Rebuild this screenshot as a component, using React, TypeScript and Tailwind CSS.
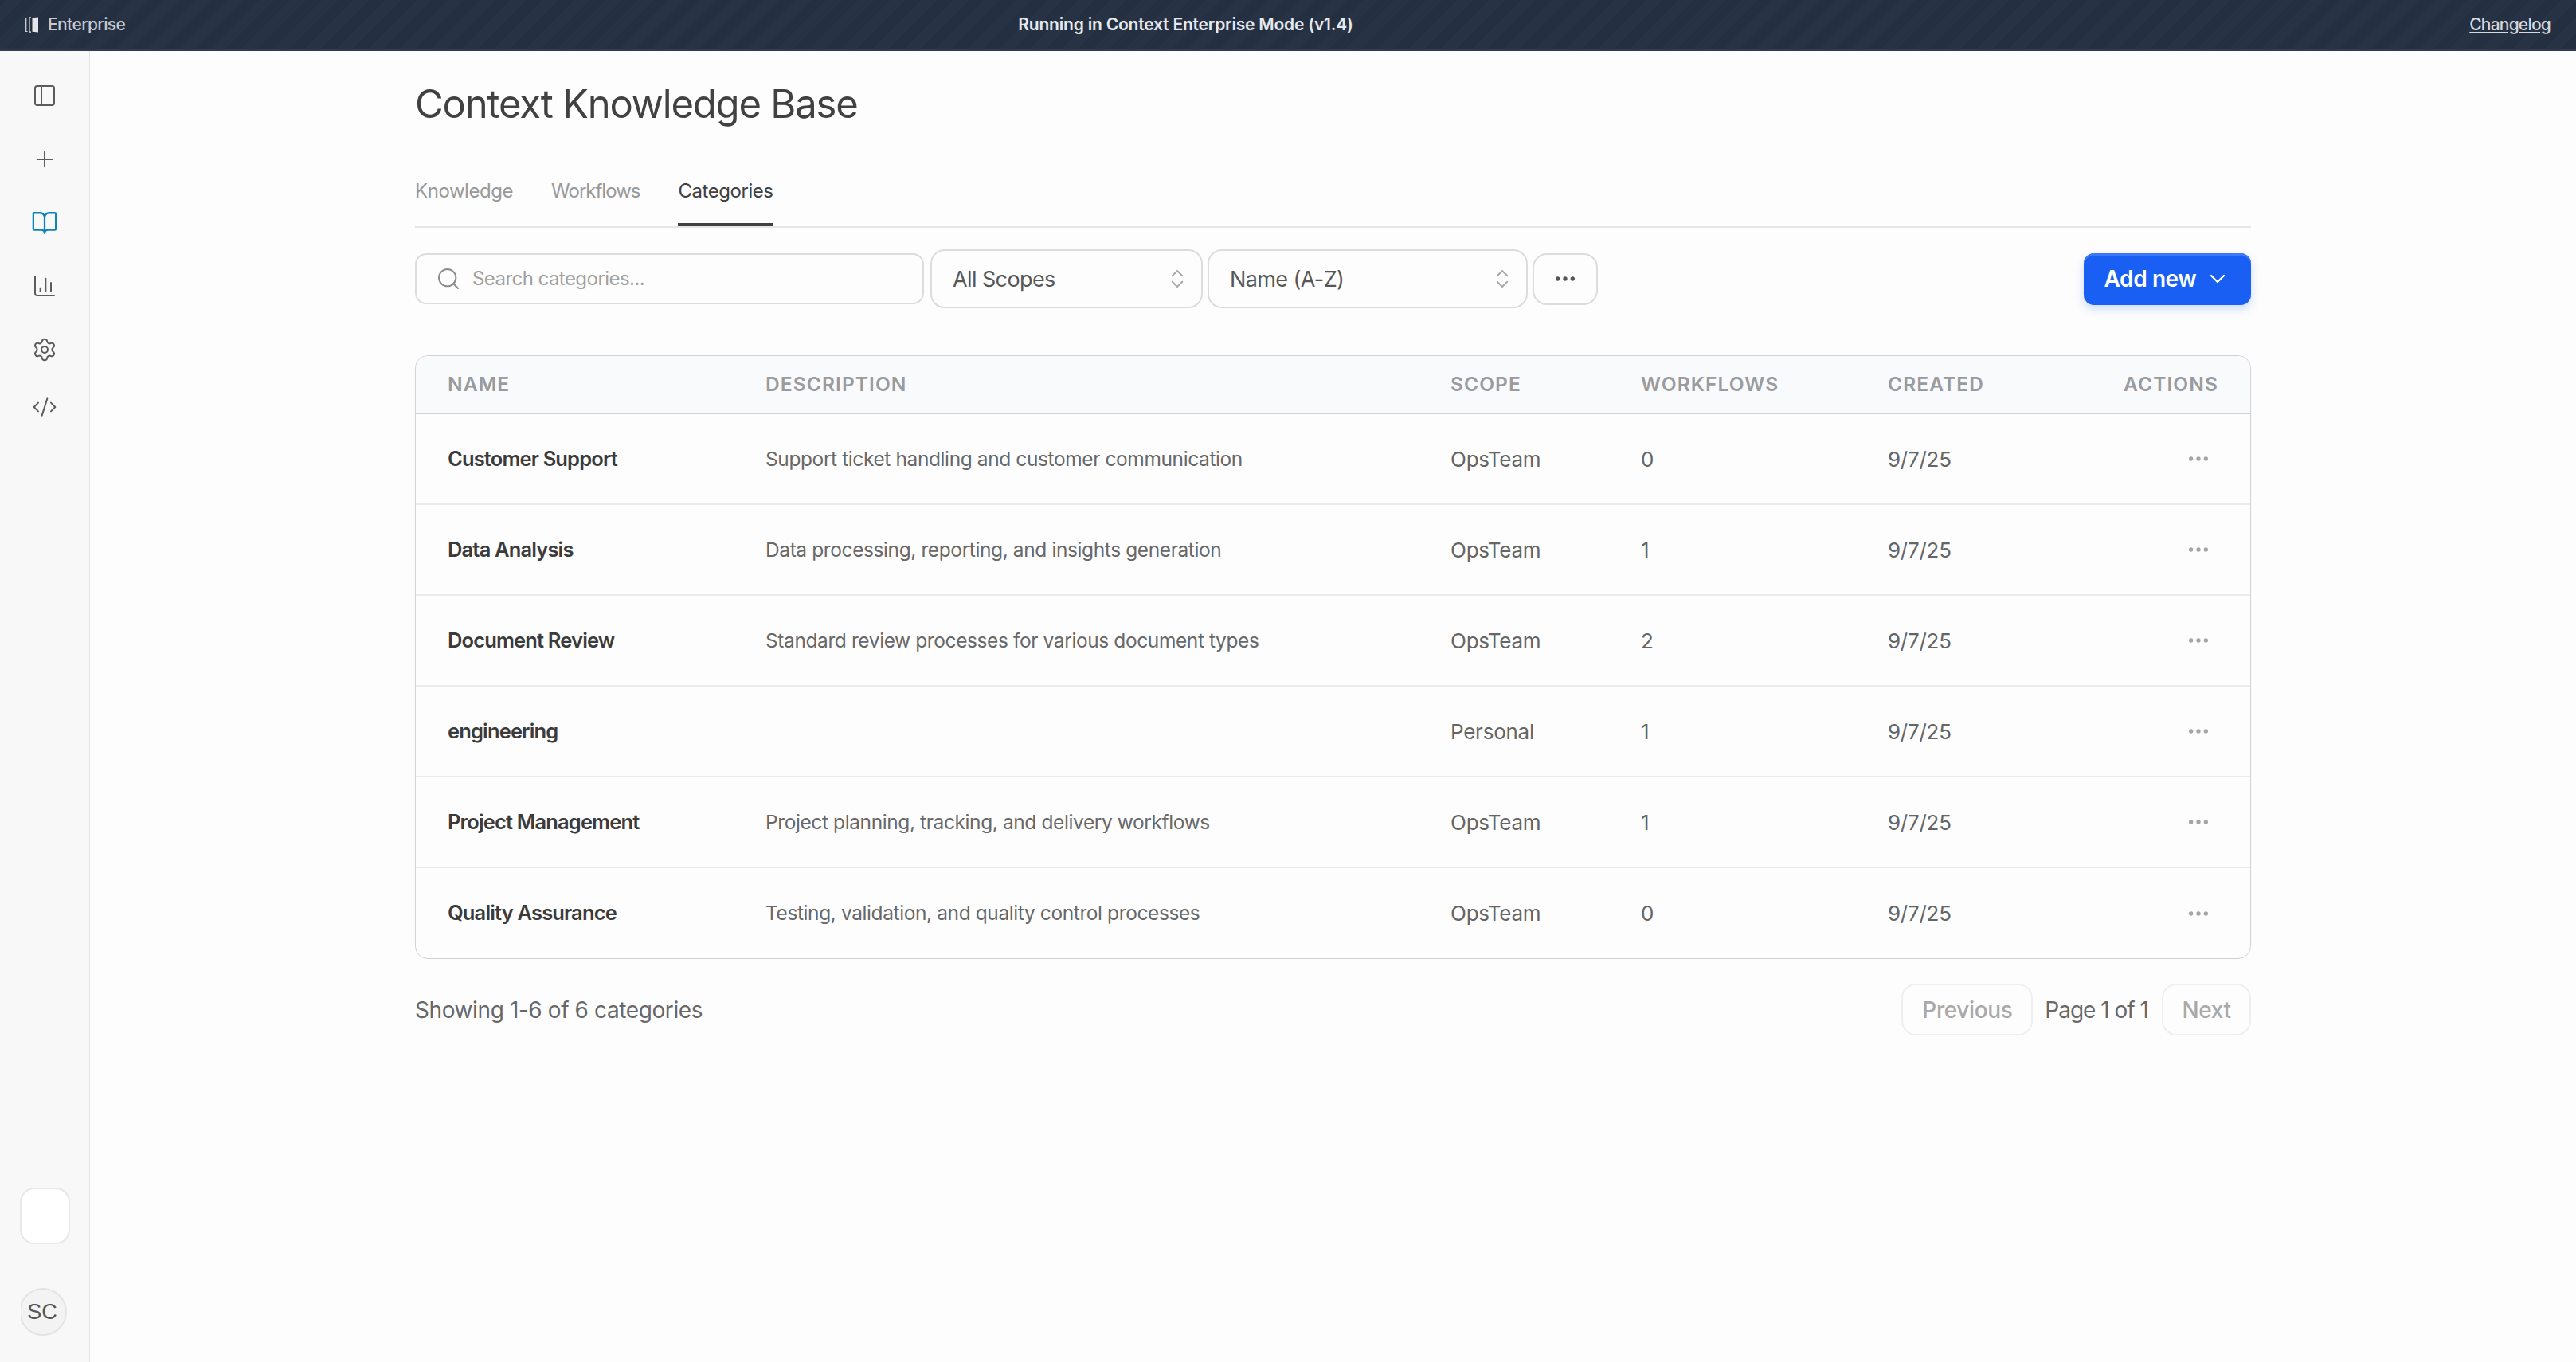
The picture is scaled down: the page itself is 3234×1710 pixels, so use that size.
import {
  BookOpen,
  ChartColumn,
  ChevronDown,
  ChevronsUpDown,
  CodeXml,
  Ellipsis,
  PanelLeft,
  Plus,
  Search,
  Settings,
} from "lucide-react";

const rows = [
  { name: "Customer Support", description: "Support ticket handling and customer communication", scope: "OpsTeam", workflows: 0 },
  { name: "Data Analysis", description: "Data processing, reporting, and insights generation", scope: "OpsTeam", workflows: 1 },
  { name: "Document Review", description: "Standard review processes for various document types", scope: "OpsTeam", workflows: 2 },
  { name: "engineering", description: "", scope: "Personal", workflows: 1 },
  { name: "Project Management", description: "Project planning, tracking, and delivery workflows", scope: "OpsTeam", workflows: 1 },
  { name: "Quality Assurance", description: "Testing, validation, and quality control processes", scope: "OpsTeam", workflows: 0 },
];

function Logo() {
  return (
    <svg width="16" height="20" viewBox="0 0 16 20" fill="none">
      <path d="M2.5 1.5H0.7V18.5H2.5" stroke="#d9dbe0" strokeWidth="1.2" />
      <path d="M7 0.8H5V19.2H7" stroke="#d9dbe0" strokeWidth="1.2" />
      <path d="M8.5 1.2L16 0.4V19.6L8.5 18.8Z" fill="#e4e6ea" />
    </svg>
  );
}

function Banner() {
  return (
    <div className="flex h-[64px] items-center border-b-[3px] border-[#303c4e] bg-[#232f40] bg-[repeating-linear-gradient(-45deg,#243041_0px,#243041_14px,#273345_14px,#273345_28px)] pl-[32px] pr-[32px]">
      <div className="flex items-center gap-[12px]">
        <Logo />
        <span className="text-[21px] font-medium tracking-[-0.6px] text-[#c7cad1]">Enterprise</span>
      </div>
      <span className="ml-[1121px] mr-auto text-[21px] font-semibold tracking-[-0.2px] text-[#e6e8ec]">
        Running in Context Enterprise Mode (v1.4)
      </span>
      <a className="text-[21px] font-medium tracking-[-0.8px] text-[#d5d8dd] underline">Changelog</a>
    </div>
  );
}

function Sidebar() {
  return (
    <aside className="flex w-[113px] shrink-0 flex-col items-center border-r border-[#e3e3e3] bg-[#f8f8f8] pb-[33px]">
      <PanelLeft size={32} strokeWidth={1.5} className="mt-[40px] text-[#5c5c5c]" />
      <Plus size={32} strokeWidth={1.5} className="mt-[48px] text-[#5c5c5c]" />
      <BookOpen size={34} strokeWidth={1.6} className="mt-[47px] text-[#0a84b5]" />
      <ChartColumn size={32} strokeWidth={1.5} className="mt-[46px] text-[#5c5c5c]" />
      <Settings size={32} strokeWidth={1.5} className="mt-[48px] text-[#5c5c5c]" />
      <CodeXml size={32} strokeWidth={1.5} className="mt-[40px] text-[#5c5c5c]" />
      <div className="mt-auto h-[71px] w-[63px] rounded-[18px] border-2 border-[#e8e8e8] bg-white" />
      <div className="ml-[-2px] mt-[55px] w-[58px] self-center overflow-hidden">
        <div className="ml-[-2px] flex h-[60px] w-[60px] items-center justify-center rounded-full border-2 border-[#e3e3e3] bg-[#f3f3f3] pr-[2px] font-['Liberation_Sans',sans-serif] text-[27px] text-[#555555]">
          SC
        </div>
      </div>
    </aside>
  );
}

function Select({ label, width }: { label: string; width: string }) {
  return (
    <button className={`flex h-[74px] items-center justify-between rounded-[18px] border-2 border-[#dcdcdc] pl-[26px] pr-[15px] text-[27px] tracking-[-0.6px] text-[#575757] ${width}`}>
      <span className="pt-[2px]">{label}</span>
      <ChevronsUpDown size={30} strokeWidth={1.6} className="text-[#a8a8a8]" />
    </button>
  );
}

function Toolbar() {
  return (
    <div className="mt-[27px] flex items-center gap-[6px]">
      <div className="mr-[2px] flex h-[64px] w-[639px] items-center gap-[14px] rounded-[14px] border-2 border-[#dcdcdc] pl-[24px] text-[24px] tracking-[-0.55px] text-[#a0a0a0]">
        <Search size={32} strokeWidth={1.5} className="text-[#8c8c8c]" />
        Search categories...
      </div>
      <Select label="All Scopes" width="w-[342px]" />
      <Select label="Name (A-Z)" width="w-[402px]" />
      <button className="flex h-[65px] w-[82px] items-center justify-center rounded-[18px] border-2 border-[#dcdcdc]">
        <Ellipsis size={32} className="text-[#555555]" />
      </button>
      <button className="ml-auto flex h-[65px] w-[210px] items-center justify-center gap-[11px] rounded-[13px] bg-[#1a5ff4] text-[28px] font-semibold tracking-[-0.4px] text-white shadow-[inset_0_3px_0_#3d78f6,0_5px_12px_rgba(26,95,244,0.22)]">
        Add new
        <ChevronDown size={32} strokeWidth={1.75} />
      </button>
    </div>
  );
}

function CategoryTable() {
  const th = "px-[40px] text-left text-[24.5px] font-semibold tracking-[1.1px] text-[#9a9b9e]";
  const td = "px-[40px] text-[26px] tracking-[-0.25px] text-[#656565]";
  return (
    <div className="mt-[59px] overflow-hidden rounded-[16px] border border-[#d2d2d6]">
      <table className="w-full table-fixed border-collapse">
        <thead>
          <tr className="h-[72px] border-b-2 border-[#cfd0d4] bg-[#f9fafc]">
            <th className={`${th} w-[399px]`}>NAME</th>
            <th className={`${th} w-[860px]`}>DESCRIPTION</th>
            <th className={`${th} w-[239px]`}>SCOPE</th>
            <th className={`${th} w-[310px]`}>WORKFLOWS</th>
            <th className={`${th} w-[270px]`}>CREATED</th>
            <th className={`${th} !text-right`}>ACTIONS</th>
          </tr>
        </thead>
        <tbody>
          {rows.map((row, i) => (
            <tr key={row.name} className={`h-[114px] ${i < rows.length - 1 ? "border-b-2 border-[#ebebed]" : ""}`}>
              <td className="px-[40px] text-[25.5px] font-semibold tracking-[-0.85px] text-[#3b3b3b]">{row.name}</td>
              <td className="px-[40px] text-[24.5px] tracking-[-0.4px] text-[#686868]">{row.description}</td>
              <td className={td}>{row.scope}</td>
              <td className={td}>{row.workflows}</td>
              <td className={td}>9/7/25</td>
              <td className="pr-[49px] text-right">
                <Ellipsis size={32} className="ml-auto text-[#a5a5a5]" />
              </td>
            </tr>
          ))}
        </tbody>
      </table>
    </div>
  );
}

function Footer() {
  return (
    <div className="mt-[31px] flex items-center text-[28px] tracking-[-0.4px] text-[#686868]">
      <span>Showing 1-6 of 6 categories</span>
      <button className="ml-auto h-[65px] w-[165px] rounded-[18px] border-2 border-[#efefef] font-medium text-[#a9a9a9]">Previous</button>
      <span className="ml-[15px] mr-[17px] tracking-[-1px]">Page 1 of 1</span>
      <button className="h-[65px] w-[112px] rounded-[18px] border-2 border-[#efefef] font-medium text-[#a9a9a9]">Next</button>
    </div>
  );
}

export default function App() {
  return (
    <div className="flex h-[1710px] w-[3234px] flex-col overflow-hidden bg-[#fdfdfd] font-['Inter',sans-serif]">
      <Banner />
      <div className="flex flex-1">
        <Sidebar />
        <main className="ml-[408px] w-[2305px] pt-[38px]">
          <h1 className="text-[49px] font-normal leading-[58px] tracking-[-1.2px] text-[#414141]">Context Knowledge Base</h1>
          <div className="mt-[63px] flex gap-[48px] border-b-2 border-[#e5e5ea] text-[24px] leading-[34px] tracking-[-0.45px]">
            <span className="pb-[27px] text-[#999999]">Knowledge</span>
            <span className="pb-[27px] tracking-[-1px] text-[#999999]">Workflows</span>
            <span className="border-b-4 border-[#404040] pb-[23px] text-[#404040]">Categories</span>
          </div>
          <Toolbar />
          <CategoryTable />
          <Footer />
        </main>
      </div>
    </div>
  );
}
